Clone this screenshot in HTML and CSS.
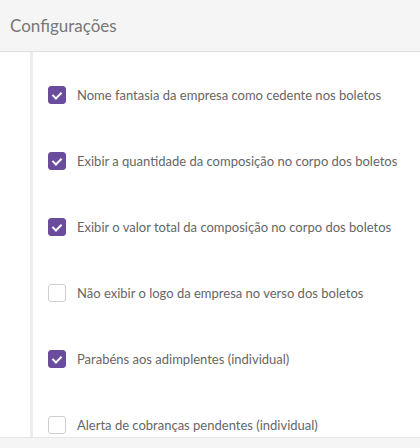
FILE: index.html
```html
<!DOCTYPE html>
<html>
<head lang="pt-BR">
    <meta charset="UTF-8">
    <title>Configurações</title>
    <link rel="stylesheet" href="styles.css">
</head>
<body>
<div class="panel">
    <div class="panel-head">Configurações</div>
    <div class="panel-body">
        <ul class="options">
            <li class="option"><span class="check on"></span>Nome fantasia da empresa como cedente nos boletos</li>
            <li class="option"><span class="check on"></span>Exibir a quantidade da composição no corpo dos boletos</li>
            <li class="option"><span class="check on"></span>Exibir o valor total da composição no corpo dos boletos</li>
            <li class="option"><span class="check"></span>Não exibir o logo da empresa no verso dos boletos</li>
            <li class="option"><span class="check on"></span>Parabéns aos adimplentes (individual)</li>
            <li class="option"><span class="check"></span>Alerta de cobranças pendentes (individual)</li>
        </ul>
    </div>
    <div class="panel-foot"></div>
</div>
</body>
</html>
```
FILE: styles.css
```css
*{
    margin: 0;
    padding: 0;
    box-sizing: border-box;
}
ul,li{
    list-style: none;
}
body{
    font-family: Lato, "Open Sans", sans-serif;
    background: #fff;
}
.panel{
    width: 420px;
    height: 448px;
    display: flex;
    flex-direction: column;
}
.panel-head{
    height: 52px;
    padding: 15px 10px 0;
    background: #f5f5f5;
    border-bottom: 1px solid #dddddd;
    font-size: 17px;
    color: #777;
}
.panel-body{
    height: 385px;
    overflow: hidden;
    padding-left: 30px;
}
.options{
    border-left: 3px solid #ececec;
    padding: 10px 0 0 15px;
    min-height: 100%;
}
.option{
    display: flex;
    align-items: center;
    height: 66px;
    font-size: 13px;
    color: #666;
}
.check{
    width: 18px;
    height: 18px;
    margin-right: 11px;
    border: 1px solid #cfcfcf;
    border-radius: 3px;
    background: #fff;
    position: relative;
    flex-shrink: 0;
}
.check.on{
    background: #6a4c9c;
    border-color: #6a4c9c;
}
.check.on::after{
    content: "";
    position: absolute;
    left: 5px;
    top: 3px;
    width: 4px;
    height: 7px;
    border: solid #fff;
    border-width: 0 2px 2px 0;
    transform: rotate(45deg);
}
.panel-foot{
    flex: 1;
    background: #f5f5f5;
    border-top: 1px solid #e6e6e6;
}
```
